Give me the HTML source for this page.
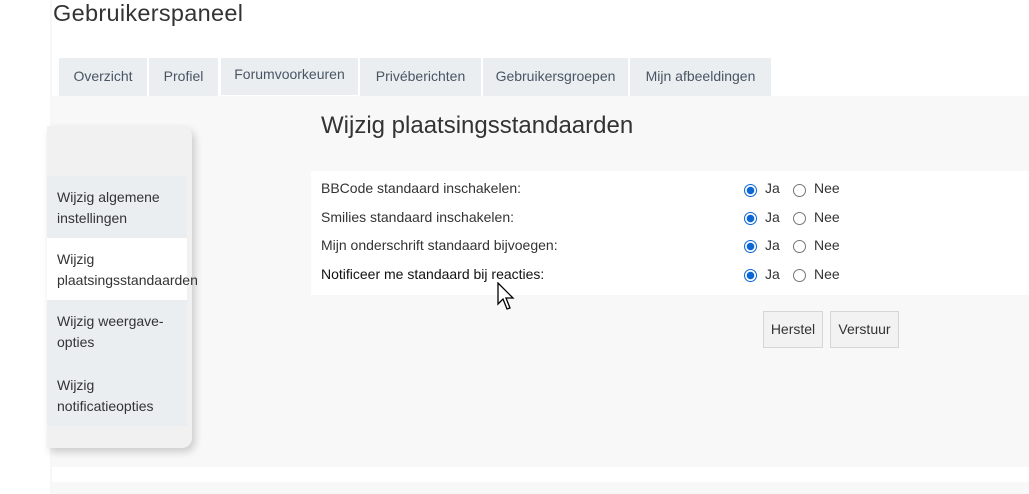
<!DOCTYPE html>
<html><head><meta charset="utf-8"><style>
*{box-sizing:border-box;margin:0;padding:0}
body{width:1029px;height:494px;background:#fff;font-family:"Liberation Sans",sans-serif;position:relative;overflow:hidden;color:#333}
.a{position:absolute}
.edge{left:50px;top:0;width:2px;height:494px;background:#f7f7f7}
h1{position:absolute;left:53px;top:0;font-weight:300;font-size:23.5px;color:#333;letter-spacing:0.3px}
.tab{position:absolute;top:58px;height:38px;background:#eaeef0;color:#4a5564;font-size:14px;text-align:center;line-height:36px}
.gray{left:52px;top:96px;width:977px;height:371px;background:#f8f8f8}
.bot{left:52px;top:482px;width:977px;height:12px;background:#f8f8f8}
.side{left:47px;top:126px;width:145px;height:322px;background:#f1f1f1;border-radius:0 10px 10px 0;box-shadow:3px 4px 8px rgba(0,0,0,.18)}
.it{position:absolute;left:47px;width:140px;background:#eaeef0;font-size:14px;line-height:21px;padding:11px 0 0 10px;color:#333;white-space:nowrap}
h2{position:absolute;left:321px;top:112px;font-weight:300;font-size:24px;color:#333}
.box{left:311px;top:171px;width:718px;height:124px;background:#fff}
.lbl{position:absolute;left:321px;font-size:14px;color:#333}
.r{position:absolute;width:13px;height:13px;border-radius:50%;border:1px solid #767676;background:#fff}
.r.on{border:1.5px solid #0b66d6;background:radial-gradient(circle,#0b66d6 0 3.5px,#fff 4px)}
.t{position:absolute;font-size:14px;color:#333}
.btn{position:absolute;top:311px;height:37px;border:1px solid #d6d6d6;background:#f2f2f2;font-size:14px;line-height:35px;text-align:center;color:#333}
</style></head><body>
<div class="a edge"></div>
<h1>Gebruikerspaneel</h1>
<div class="a gray"></div>
<div class="a bot"></div>
<div class="tab" style="left:59px;width:88px">Overzicht</div>
<div class="tab" style="left:149px;width:69px">Profiel</div>
<div class="tab" style="left:221px;width:137px;height:37px;line-height:33px">Forumvoorkeuren</div>
<div class="tab" style="left:360px;width:121px">Privéberichten</div>
<div class="tab" style="left:483px;width:145px">Gebruikersgroepen</div>
<div class="tab" style="left:630px;width:141px">Mijn afbeeldingen</div>
<div class="a side"></div>
<div class="it" style="top:176px;height:62px">Wijzig algemene<br>instellingen</div>
<div class="it" style="top:238px;height:62px;background:#fff">Wijzig<br>plaatsingsstandaarden</div>
<div class="it" style="top:300px;height:64px">Wijzig weergave-<br>opties</div>
<div class="it" style="top:364px;height:62px">Wijzig<br>notificatieopties</div>
<h2>Wijzig plaatsingsstandaarden</h2>
<div class="a box"></div>
<div class="lbl" style="top:180px">BBCode standaard inschakelen:</div>
<div class="lbl" style="top:209px">Smilies standaard inschakelen:</div>
<div class="lbl" style="top:237px">Mijn onderschrift standaard bijvoegen:</div>
<div class="lbl" style="top:266px;color:#111">Notificeer me standaard bij reacties:</div>
<div class="r on" style="left:744px;top:184px"></div><div class="t" style="left:765px;top:180px">Ja</div>
<div class="r" style="left:793px;top:184px"></div><div class="t" style="left:814px;top:180px">Nee</div>
<div class="r on" style="left:744px;top:212px"></div><div class="t" style="left:765px;top:209px">Ja</div>
<div class="r" style="left:793px;top:212px"></div><div class="t" style="left:814px;top:209px">Nee</div>
<div class="r on" style="left:744px;top:240px"></div><div class="t" style="left:765px;top:237px">Ja</div>
<div class="r" style="left:793px;top:240px"></div><div class="t" style="left:814px;top:237px">Nee</div>
<div class="r on" style="left:744px;top:269px"></div><div class="t" style="left:765px;top:266px">Ja</div>
<div class="r" style="left:793px;top:269px"></div><div class="t" style="left:814px;top:266px">Nee</div>
<div class="btn" style="left:763px;width:60px">Herstel</div>
<div class="btn" style="left:830px;width:69px">Verstuur</div>
<svg class="a" style="left:497px;top:282px" width="20" height="30" viewBox="0 0 20 30"><path d="M1 1 L1 22 L6 17 L10 27 L13 26 L9 16 L16 16 Z" fill="#fff" stroke="#000" stroke-width="1.3"/></svg>
</body></html>
